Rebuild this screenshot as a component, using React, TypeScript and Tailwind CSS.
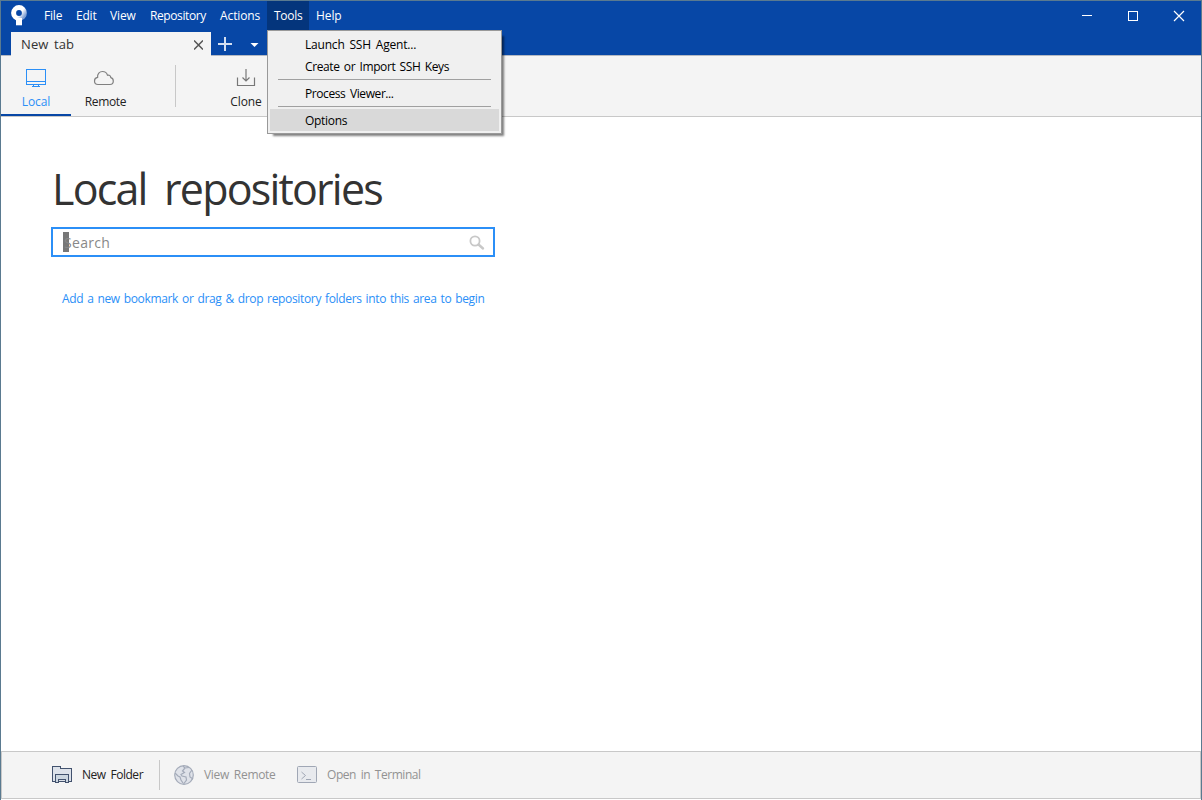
import type { ReactNode } from "react";

function Logo() {
  return (
    <svg width="16" height="21" viewBox="0 0 16 21">
      <defs>
        <linearGradient id="ringFade" x1="0.35" y1="0.45" x2="0.95" y2="0.9">
          <stop offset="0.35" stopColor="#fff" />
          <stop offset="1" stopColor="#7fa0d4" />
        </linearGradient>
      </defs>
      <circle cx="8" cy="8" r="5.4" fill="none" stroke="url(#ringFade)" strokeWidth="5" />
      <path d="M5 13h6v7.3H5z" fill="#fff" />
    </svg>
  );
}

function MenuLabel({ children, className = "" }: { children: ReactNode; className?: string }) {
  return <div className={`flex h-[30px] items-center px-[7px] ${className}`}>{children}</div>;
}

function MenuRow({ children, className = "" }: { children: ReactNode; className?: string }) {
  return <div className={`flex h-[22px] items-center pl-[35px] whitespace-pre ${className}`}>{children}</div>;
}

function ToolsMenu() {
  return (
    <div className="absolute top-[29px] left-0 z-10 h-[104px] w-[235px] border border-[#999] bg-[#f0f0f0] px-[2px] pt-[3px] text-black shadow-[4px_4px_2px_-2px_rgba(0,0,0,0.5)]">
      <MenuRow className="pb-px tracking-[-0.2px] [word-spacing:2px]">Launch SSH Agent...</MenuRow>
      <MenuRow className="pb-px tracking-[-0.38px] [word-spacing:1.5px]">Create or Import SSH Keys</MenuRow>
      <div className="mx-2 mt-px mb-[3px] h-px bg-[#a0a0a0]" />
      <MenuRow className="pb-px tracking-[-0.42px] [word-spacing:2px]">Process Viewer...</MenuRow>
      <div className="mx-2 mt-px mb-[2px] h-px bg-[#a0a0a0]" />
      <MenuRow className="bg-[#d9d9d9] pt-px tracking-[-0.3px]">Options</MenuRow>
    </div>
  );
}

export default function App() {
  return (
    <div className="flex h-[800px] w-[1202px] flex-col overflow-hidden border border-b-0 border-[#5a7a90] bg-white font-['Open_Sans','Noto_Sans_CJK_KR',sans-serif] text-[12px] leading-4 text-[#222]">
      <header className="flex h-[55px] shrink-0 flex-col border-b border-[#b4b9c2] bg-[#0747a6] text-white">
        <div className="flex h-[31px] shrink-0 justify-between">
          <div className="flex">
            <div className="mr-[3px] w-[33px] pt-1 pl-[10px]">
              <Logo />
            </div>
            <MenuLabel className="w-8 tracking-[-0.2px]">File</MenuLabel>
            <MenuLabel className="w-[34px] tracking-[-0.2px]">Edit</MenuLabel>
            <MenuLabel className="w-10 tracking-[-0.1px]">View</MenuLabel>
            <MenuLabel className="w-[70px] tracking-[-0.4px]">Repository</MenuLabel>
            <MenuLabel className="w-[54px] tracking-[-0.1px]">Actions</MenuLabel>
            <div className="relative w-[42px] bg-[#04357c]">
              <MenuLabel className="tracking-[-0.3px]">Tools</MenuLabel>
              <ToolsMenu />
            </div>
            <MenuLabel className="tracking-[-0.1px]">Help</MenuLabel>
          </div>
          <svg width="138" height="30" viewBox="0 0 138 30" fill="none" stroke="#fff" shapeRendering="crispEdges">
            <path d="M19 14.500h10M65.500 10.500h9v9h-9z" />
            <path d="M111 10l10 10M121 10l-10 10" strokeWidth="1.200" shapeRendering="auto" />
          </svg>
        </div>
        <div className="-mb-px flex h-6 shrink-0">
          <div className="ml-[10px] flex w-[200px] items-center justify-between bg-[#f4f4f4] pr-2 pl-[10px] text-[13px] text-[#333]">
            <span className="tracking-[0.1px] [word-spacing:2px]">New tab</span>
            <svg className="mt-0.5" width="9" height="10" viewBox="0 0 9 10" stroke="#555" strokeWidth="1.500">
              <path d="M0 .5l9 9M9 .5l-9 9" />
            </svg>
          </div>
          <svg width="56" height="23" viewBox="0 0 56 23">
            <path d="M7 12h14M14 5v14" stroke="#d3dff1" strokeWidth="2" />
            <path d="M39.500 11h8l-4 4z" fill="#fff" />
          </svg>
        </div>
      </header>

      <nav className="flex h-[61px] shrink-0 border-b border-[#c8c8c8] bg-[#f4f4f4]">
        <div className="flex w-[70px] flex-col items-center border-b-2 border-[#0747a6] pt-[12px] text-[#2b8ff7]">
          <svg width="22" height="20" viewBox="0 0 22 20" fill="none" stroke="#2b8ff7" shapeRendering="crispEdges">
            <path d="M1.500 1.500h19v15h-19zM1 13.500h20M8.500 17v1.500M13.500 17v1.500M7 18.500h8" />
          </svg>
          <span className="mt-[6px] tracking-[-0.1px]">Local</span>
        </div>
        <div className="flex w-[69px] flex-col items-center pt-[12px]">
          <svg className="mr-[3px]" width="22" height="20" viewBox="0 0 22 20" fill="none" stroke="#808080" strokeWidth="1.200">
            <path d="M5 16.500C2.600 16.500 1.500 14.800 1.500 13C1.500 11 2.800 9.700 4.600 9.400C4.200 6 6.500 3.500 9.500 3.500C12 3.500 13.800 5 14.500 7.200C16.600 6.700 17.700 8 17.800 9.600C19.500 10 20.300 11.400 20.300 13C20.300 15 19 16.500 17 16.500z" />
          </svg>
          <span className="mt-[6px] tracking-[-0.35px]">Remote</span>
        </div>
        <div className="mt-[9px] ml-[35px] h-[42px] w-px bg-[#c8c8c8]" />
        <div className="ml-[50px] flex w-10 flex-col items-center pt-[12px]">
          <svg width="20" height="20" viewBox="0 0 20 20" fill="none" stroke="#777">
            <path d="M1.500 9.500v8h17v-8M10 1v12M6.500 9.500l3.500 3.500l3.500-3.500" strokeWidth="1.200" />
          </svg>
          <span className="mt-[6px] tracking-[-0.1px]">Clone</span>
        </div>
      </nav>

      <main className="flex-1 pt-[42px] pl-[50px]">
        <h1 className="pl-px text-[43px] leading-[60px] tracking-[-1.800px] whitespace-nowrap text-[#333] [word-spacing:8px]">
          Local repositories
        </h1>
        <div className="mt-[8px] flex h-[30px] w-[444px] items-center justify-between border-2 border-[#2b8ff7] pr-2 pl-[10px]">
          <div className="flex items-center">
            <span className="h-5 w-[6px] bg-[#777]" />
            <span className="-ml-[5px] pt-0.5 text-[14px] tracking-[0.3px] text-[#888]">Search</span>
          </div>
          <svg className="mt-0.5" width="16" height="16" viewBox="0 0 16 16" fill="none" stroke="#c8c8c8">
            <circle cx="6" cy="6" r="4.600" strokeWidth="1.800" />
            <path d="M9.500 9.500l4.500 4" strokeWidth="2.400" strokeLinecap="round" />
          </svg>
        </div>
        <p className="mt-[34px] pl-[11px] tracking-[-0.34px] whitespace-nowrap text-[#2b8ff7] [word-spacing:1.15px]">
          Add a new bookmark or drag &amp; drop repository folders into this area to begin
        </p>
      </main>

      <footer className="mb-px flex h-12 shrink-0 items-center border border-[#c8c8c8] bg-[#f4f4f4] text-[#929292]">
        <svg className="ml-[49px]" width="22" height="20" viewBox="0 0 22 20" fill="#dde2ea" stroke="#42526e" shapeRendering="crispEdges">
          <path d="M1.500 1.500h8v2h11v13h-19z" />
          <path d="M4.500 17.500v-8h13v8h-3v-3h-7v3z" fill="#ccd6e0" />
        </svg>
        <span className="ml-[9px] w-[62px] tracking-[-0.45px] whitespace-nowrap text-[#222] [word-spacing:2px]">New Folder</span>
        <div className="ml-[15px] h-[30px] w-px bg-[#c8c8c8]" />
        <svg className="ml-[14px]" width="20" height="20" viewBox="0 0 20 20" fill="#dfe2e9" stroke="#a4abb9" strokeWidth="1.200">
          <circle cx="10" cy="10" r="9.300" />
          <path d="M9 1L11 3L8.500 6L10.500 7.500L7 9.500L8 11L12 12L12.500 15L9.500 19M1 8L4 11L6 12L7 15L9 18M11 3L15 2.500M18 5L15.500 8.500L16 12L19 14" fill="none" />
        </svg>
        <span className="ml-[10px] w-[73px] tracking-[-0.3px] whitespace-nowrap [word-spacing:2px]">View Remote</span>
        <svg className="ml-5" width="20" height="18" viewBox="0 0 20 18" fill="#e8eaee" stroke="#a0a7b5">
          <rect x=".5" y=".5" width="19" height="16" rx="1" />
          <path d="M4.500 6l4 3.500l-4 3.500M9 13.500h5" fill="none" />
        </svg>
        <span className="ml-[10px] tracking-[-0.45px] whitespace-nowrap [word-spacing:2px]">Open in Terminal</span>
      </footer>
    </div>
  );
}
